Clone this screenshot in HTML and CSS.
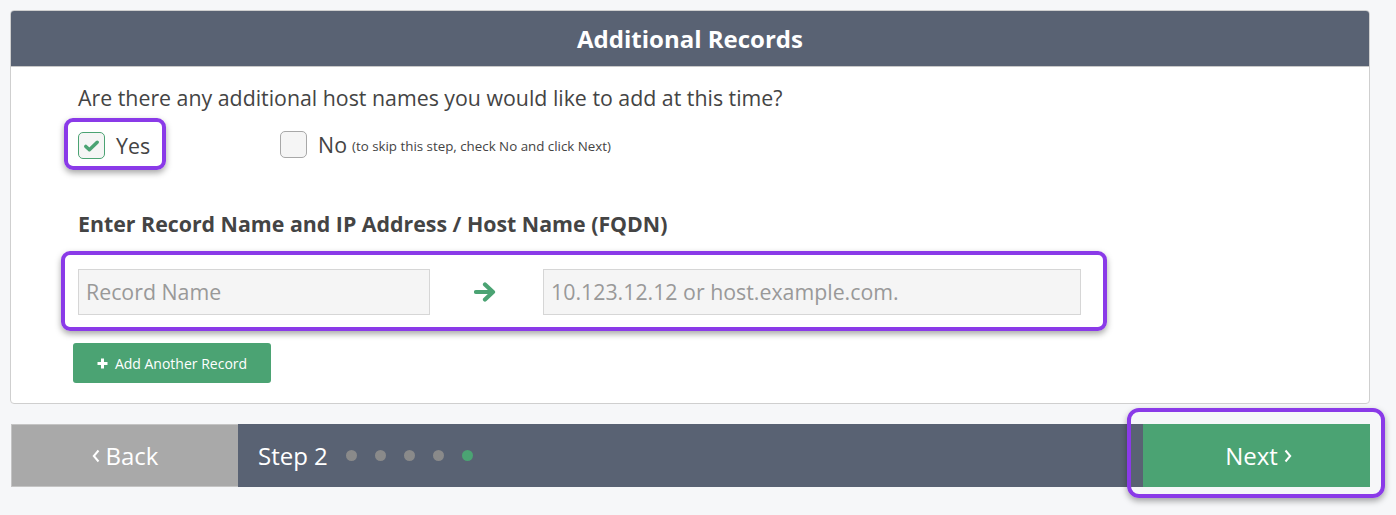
FILE: index.html
```html
<!DOCTYPE html>
<html>
<head>
<meta charset="utf-8">
<link rel="stylesheet" href="styles.css">
</head>
<body>
<div class="page">
  <div class="card">
    <div class="card-header">Additional Records</div>
    <div class="card-body">
      <p class="question">Are there any additional host names you would like to add at this time?</p>
      <div class="choices">
        <label class="choice choice-yes highlight">
          <span class="box box-checked">
            <svg width="15" height="12" viewBox="0 0 15 12"><path d="M1.8 6.4 L5.4 9.8 L13.2 2.2" fill="none" stroke="#4ba373" stroke-width="3.4" stroke-linecap="round" stroke-linejoin="round"/></svg>
          </span>
          <span class="choice-label">Yes</span>
        </label>
        <label class="choice choice-no">
          <span class="box"></span>
          <span class="choice-label">No</span>
          <span class="choice-note">(to skip this step, check No and click Next)</span>
        </label>
      </div>
      <h2 class="subheading">Enter Record Name and IP Address / Host Name (FQDN)</h2>
      <div class="record-row highlight">
        <div class="field field-name">Record Name</div>
        <div class="arrow">
          <svg width="23" height="20" viewBox="0 0 23 20"><path d="M2 10 H19 M11 2.5 L19 10 L11 17.5" fill="none" stroke="#4ba373" stroke-width="4.2" stroke-linecap="round" stroke-linejoin="round"/></svg>
        </div>
        <div class="field field-ip">10.123.12.12 or host.example.com.</div>
      </div>
      <div class="add-btn">
        <svg width="11" height="11" viewBox="0 0 11 11"><path d="M5.5 0.5 V10.5 M0.5 5.5 H10.5" stroke="#fff" stroke-width="3"/></svg>
        <span>Add Another Record</span>
      </div>
    </div>
  </div>

  <div class="wizard-bar">
    <div class="back-btn">
      <svg width="8" height="14" viewBox="0 0 8 14"><path d="M6.5 1.5 L1.8 7 L6.5 12.5" fill="none" stroke="#fff" stroke-width="2"/></svg>
      <span>Back</span>
    </div>
    <div class="steps">
      <span class="step-label">Step 2</span>
      <span class="dot"></span>
      <span class="dot"></span>
      <span class="dot"></span>
      <span class="dot"></span>
      <span class="dot dot-active"></span>
    </div>
    <div class="next-btn">
      <span>Next</span>
      <svg width="8" height="14" viewBox="0 0 8 14"><path d="M1.5 1.5 L6.2 7 L1.5 12.5" fill="none" stroke="#fff" stroke-width="2"/></svg>
      <span class="next-highlight"></span>
    </div>
  </div>
</div>
</body>
</html>
```

FILE: styles.css
```css
* { box-sizing: border-box; }

html, body {
  margin: 0;
  padding: 0;
  background: #f6f7f9;
  font-family: "Open Sans", "Noto Sans", sans-serif;
  color: #444;
}

body {
  min-height: 515px;
}

.page {
  padding: 10px 26px 28px 10px;
  width: 1396px;
}

.card {
  border: 1px solid #cfcfcf;
  border-radius: 4px;
  background: #fff;
  overflow: hidden;
}

.card-header {
  height: 56px;
  background: #596273;
  color: #fff;
  font-weight: 700;
  font-size: 24px;
  line-height: 56px;
  text-align: center;
  border-bottom: 1px solid #c8c8c8;
}

.card-body {
  padding: 16px 20px 20px 67px;
}

.question {
  margin: 0;
  font-size: 21.33px;
  line-height: 30px;
  color: #444;
}

.choices {
  display: flex;
  align-items: center;
  margin-top: 5px;
  height: 52px;
}

.choice {
  display: flex;
  align-items: center;
}

.highlight {
  border: 4px solid #8a3ae8;
  border-radius: 9px;
  box-shadow: 0 3px 6px rgba(0, 0, 0, 0.35);
}

.choice-yes {
  margin-left: -14px;
  padding: 10px 12px 7px 10px;
  height: 52px;
}

.choice-no {
  margin-left: 114px;
}

.box {
  width: 27px;
  height: 27px;
  border: 1px solid #a8a8a8;
  border-radius: 5px;
  background: #f5f5f5;
  display: flex;
  align-items: center;
  justify-content: center;
}

.box-checked {
  border-color: #4ba373;
}

.choice-label {
  font-size: 21.33px;
  margin-left: 11px;
  color: #444;
}

.choice-note {
  font-size: 13.33px;
  margin-left: 5px;
  margin-top: 4px;
  color: #444;
}

.subheading {
  margin: 39px 0 0 0;
  font-size: 21.33px;
  font-weight: 700;
  line-height: 30px;
  color: #444;
}

.record-row {
  margin: 12px 0 0 -17px;
  width: 1046px;
  height: 80px;
  display: flex;
  align-items: center;
  padding: 2px 22px 0 13px;
}

.field {
  height: 46px;
  background: #f5f5f5;
  border: 1px solid #d6d6d6;
  font-size: 21.33px;
  color: #999;
  line-height: 44px;
  padding: 0 7px;
}

.field-name {
  width: 352px;
}

.arrow {
  width: 113px;
  display: flex;
  justify-content: center;
  padding-right: 2px;
}

.field-ip {
  width: 538px;
}

.add-btn {
  margin: 12px 0 0 -5px;
  width: 198px;
  height: 40px;
  background: #4ba373;
  border-radius: 3px;
  color: #fff;
  font-size: 14px;
  display: flex;
  align-items: center;
  justify-content: center;
  gap: 7px;
}

.wizard-bar {
  margin-top: 20px;
  margin-left: 1px;
  height: 63px;
  display: flex;
  background: #596273;
}

.back-btn, .next-btn {
  width: 227px;
  color: #fff;
  font-size: 24px;
  display: flex;
  align-items: center;
  justify-content: center;
  gap: 6px;
}

.back-btn {
  background: #a9a9a9;
  border-top: 1px solid #c4c4c4;
  border-left: 1px solid #c4c4c4;
  border-bottom: 1px solid #c4c4c4;
}

.next-btn {
  background: #4ba373;
  position: relative;
  margin-left: auto;
  padding-left: 4px;
}

.next-highlight {
  position: absolute;
  top: -16px;
  left: -16px;
  right: -15px;
  bottom: -11px;
  border: 4px solid #8a3ae8;
  border-radius: 12px;
  box-shadow: 0 3px 6px rgba(0, 0, 0, 0.35);
}

.steps {
  display: flex;
  align-items: center;
  padding-left: 20px;
  color: #fff;
}

.step-label {
  font-size: 24px;
  margin-right: 18px;
}

.dot {
  width: 11px;
  height: 11px;
  border-radius: 50%;
  background: #8a8a8a;
  margin-right: 18px;
}

.dot-active {
  background: #4ba373;
}
```
